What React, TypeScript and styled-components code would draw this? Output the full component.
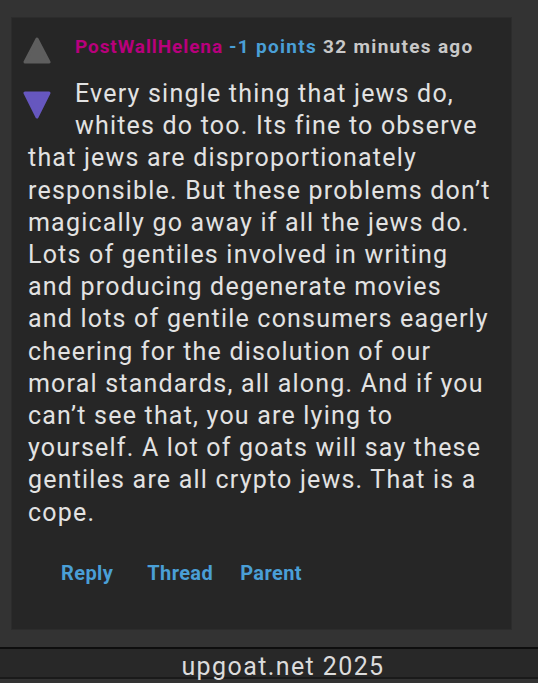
import React from "react";
import styled, { createGlobalStyle } from "styled-components";

const Global = createGlobalStyle`
  html, body { margin: 0; padding: 0; background: #333333; }
  body { font-family: Roboto, "Noto Sans", sans-serif; }
`;

const Page = styled.div`
  display: flex;
  flex-direction: column;
  min-height: 683px;
`;

const Main = styled.main`
  padding: 17px 26px 17px 11px;
`;

const Card = styled.article`
  background: #262626;
  border: 1px solid #2c2c2c;
  padding: 12px 12px 30px 11px;
  box-sizing: border-box;
  height: 613px;
`;

const Votes = styled.div`
  float: left;
  width: 28px;
  margin: 6px 24px 0 0;
  display: flex;
  flex-direction: column;
  gap: 27px;
`;

const Arrow = styled.svg<{ $color: string }>`
  display: block;
  width: 28px;
  height: 28px;
  fill: ${(p) => p.$color};
  stroke: ${(p) => p.$color};
`;

const Body = styled.div`
  padding: 0 8px 0 5px;
`;

const Meta = styled.div`
  font-size: 19px;
  font-weight: 700;
  line-height: 24px;
  letter-spacing: 1.3px;
  margin: 5px 0 19px;
  color: #c8c8c8;
  white-space: nowrap;
`;

const User = styled.span`
  color: #b8007c;
  letter-spacing: 0.9px;
`;

const Points = styled.span`
  color: #4a9fd6;
`;

const Text = styled.p`
  margin: 0;
  font-size: 25px;
  line-height: 32.2px;
  letter-spacing: 1.2px;
  color: #e2e2e2;
`;

const Links = styled.nav`
  clear: both;
  display: flex;
  gap: 27px;
  padding: 32px 0 0 38px;
`;

const Link = styled.a<{ $extra?: number }>`
  font-size: 20px;
  font-weight: 700;
  letter-spacing: 0.4px;
  color: #4a9fd6;
  text-decoration: none;
  margin-right: ${(p) => p.$extra ?? 0}px;
  cursor: pointer;
`;

const Footer = styled.footer`
  border-top: 2px solid #0e0e0e;
  border-bottom: 2px solid #1a1a1a;
  background: #282828;
  text-align: center;
  font-size: 25px;
  line-height: 29px;
  letter-spacing: 1.4px;
  color: #dcdcdc;
  padding: 3px 0 0 28px;
  height: 32px;
  box-sizing: border-box;
`;

const Up = () => (
  <Arrow $color="#5e5e5e" viewBox="0 0 28 28">
    <polygon points="14,3 26,26 2,26" strokeWidth="3" strokeLinejoin="round" />
  </Arrow>
);

const Down = () => (
  <Arrow $color="#6657bf" viewBox="0 0 28 28">
    <polygon points="2,2 26,2 14,26" strokeWidth="3" strokeLinejoin="round" />
  </Arrow>
);

export default function App() {
  return (
    <Page>
      <Global />
      <Main>
        <Card>
          <Votes>
            <Up />
            <Down />
          </Votes>
          <Body>
            <Meta>
              <User>PostWallHelena</User> <Points>-1 points</Points> 32 minutes ago
            </Meta>
            <Text>
              Every single thing that jews do, whites do too. Its fine to observe that jews are
              disproportionately responsible. But these problems don’t magically go away if all
              the jews do. Lots of gentiles involved in writing and producing degenerate movies
              and lots of gentile consumers eagerly cheering for the disolution of our moral
              standards, all along. And if you can’t see that, you are lying to yourself. A lot of
              goats will say these gentiles are all crypto jews. That is a cope.
            </Text>
          </Body>
          <Links>
            <Link $extra={7}>Reply</Link>
            <Link>Thread</Link>
            <Link>Parent</Link>
          </Links>
        </Card>
      </Main>
      <Footer>upgoat.net 2025</Footer>
    </Page>
  );
}
